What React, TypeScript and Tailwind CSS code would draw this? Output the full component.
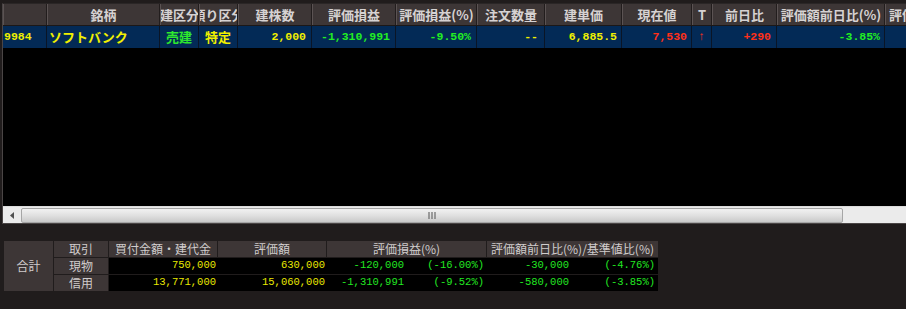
import React from "react";

const JP = "font-['Noto_Sans_CJK_JP',sans-serif]";
const MONO = "font-['Liberation_Mono','Noto_Sans_CJK_JP',monospace]";

type Col = { label: string; w: string };

const cols: Col[] = [
  { label: "", w: "w-[44px]" },
  { label: "銘柄", w: "w-[113px]" },
  { label: "建区分", w: "w-[39px]" },
  { label: "預り区分", w: "w-[39px]" },
  { label: "建株数", w: "w-[74px]" },
  { label: "評価損益", w: "w-[84px]" },
  { label: "評価損益(%)", w: "w-[81px]" },
  { label: "注文数量", w: "w-[68px]" },
  { label: "建単価", w: "w-[77px]" },
  { label: "現在値", w: "w-[70px]" },
  { label: "T", w: "w-[20px]" },
  { label: "前日比", w: "w-[65px]" },
  { label: "評価額前日比(%)", w: "w-[108px]" },
];

const row = [
  { v: "9984", c: "text-[#f0f000]", a: "justify-start pl-[1px]" },
  { v: "ソフトバンク", c: "text-[#f0f000]", a: "justify-start pl-[2px]" },
  { v: "売建", c: "text-[#2ee82e]", a: "justify-center" },
  { v: "特定", c: "text-[#f0f000]", a: "justify-center" },
  { v: "2,000", c: "text-[#f0f000]", a: "justify-end pr-[5px]" },
  { v: "-1,310,991", c: "text-[#22ee22]", a: "justify-end pr-[5px]" },
  { v: "-9.50%", c: "text-[#22ee22]", a: "justify-end pr-[5px]" },
  { v: "--", c: "text-[#f0f000]", a: "justify-end pr-[6px]" },
  { v: "6,885.5", c: "text-[#f0f000]", a: "justify-end pr-[4px]" },
  { v: "7,530", c: "text-[#ff3018]", a: "justify-end pr-[4px]" },
  { v: "↑", c: "text-[#ff3018]", a: "justify-center" },
  { v: "+290", c: "text-[#ff3018]", a: "justify-end pr-[5px]" },
  { v: "-3.85%", c: "text-[#22ee22]", a: "justify-end pr-[4px]" },
];

const summaryRows = [
  { k: "現物", a: "750,000", b: "630,000", c: "-120,000", d: "(-16.00%)", e: "-30,000", f: "(-4.76%)" },
  { k: "信用", a: "13,771,000", b: "15,060,000", c: "-1,310,991", d: "(-9.52%)", e: "-580,000", f: "(-3.85%)" },
];

export default function App() {
  return (
    <div className="w-[906px] h-[309px] bg-[#201c1c] pt-[3px] pl-[2px] overflow-hidden">
      {/* position grid */}
      <div className="h-[221px] border-l border-b border-[#4a4545] border-t border-t-[#2a2626] bg-black flex flex-col overflow-hidden">
        <div className={`flex h-[22px] shrink-0 border-b border-[#1c1818] ${JP}`}>
          {cols.map((c, i) => (
            <div
              key={i}
              className={`${c.w} shrink-0 h-full flex items-center justify-center overflow-hidden whitespace-nowrap bg-[#3d3636] border-l border-l-[#5b5353] border-r border-r-[#221d1d] text-[13px] font-bold text-[#d6d2d2]`}
            >
              {c.label}
            </div>
          ))}
          <div className="w-[120px] shrink-0 h-full flex items-center pl-[3px] overflow-hidden whitespace-nowrap bg-[#3d3636] border-l border-l-[#5b5353] text-[13px] font-bold text-[#d6d2d2]">
            評価損益額
          </div>
        </div>
        <div className="flex h-[22px] shrink-0 bg-[#032a56]">
          {cols.map((c, i) => (
            <div
              key={i}
              className={`${c.w} shrink-0 h-full flex items-center overflow-hidden whitespace-nowrap border-r border-[#0a1526] ${row[i].a} ${row[i].c} ${i === 1 || i === 2 || i === 3 ? JP + " text-[13px]" : MONO + " text-[11.5px]"} font-bold`}
            >
              {row[i].v}
            </div>
          ))}
          <div className="flex-1" />
        </div>
        <div className="flex-1" />
        {/* horizontal scrollbar */}
        <div className="h-[17px] shrink-0 flex bg-[#ebebeb] border-t border-[#dcdcdc]">
          <div className="w-[18px] h-full flex items-center justify-center">
            <svg width="5" height="7" viewBox="0 0 5 7">
              <path d="M4 0 L0 3.5 L4 7 Z" fill="#505050" />
            </svg>
          </div>
          <div className="w-[822px] h-[15px] my-[1px] rounded-[2px] border border-[#a6a6a6] bg-gradient-to-b from-[#f2f2f2] via-[#e0e0e0] to-[#c9c9c9] flex items-center justify-center">
            <svg width="9" height="7" viewBox="0 0 9 7">
              <path d="M1 0 V7 M4 0 V7 M7 0 V7" stroke="#6a6a6a" strokeWidth="1.2" />
            </svg>
          </div>
          <div className="flex-1" />
        </div>
      </div>

      {/* summary */}
      <div className={`mt-[17px] ml-[2px] flex gap-[1px] text-[12px] ${JP}`}>
        <div className="w-[49px] h-[50px] bg-[#3d3636] flex items-center justify-center text-[#d0cccc]">
          合計
        </div>
        <div className="flex flex-col gap-[1px]">
          <div className="flex h-[16px] gap-[1px] text-[#d0cccc]">
            <div className="w-[54px] bg-[#3d3636] flex items-center justify-center">取引</div>
            <div className="w-[108px] bg-[#3d3636] flex items-center justify-center">買付金額・建代金</div>
            <div className="w-[108px] bg-[#3d3636] flex items-center justify-center">評価額</div>
            <div className="w-[159px] bg-[#3d3636] flex items-center justify-center">評価損益(%)</div>
            <div className="w-[171px] bg-[#3d3636] flex items-center justify-center whitespace-nowrap">評価額前日比(%)/基準値比(%)</div>
          </div>
          {summaryRows.map((r) => (
            <div key={r.k} className="flex h-[16px] gap-[1px]">
              <div className="w-[54px] bg-[#3d3636] flex items-center justify-center text-[#d0cccc]">{r.k}</div>
              <div className={`w-[549px] bg-black flex items-center ${MONO} text-[10.5px]`}>
                <div className="w-[107px] text-right text-[#e8e800]">{r.a}</div>
                <div className="w-[109px] text-right text-[#e8e800]">{r.b}</div>
                <div className="w-[79px] text-right text-[#22e822]">{r.c}</div>
                <div className="w-[80px] text-right text-[#22e822]">{r.d}</div>
                <div className="w-[85px] text-right text-[#22e822]">{r.e}</div>
                <div className="w-[86px] text-right text-[#22e822]">{r.f}</div>
              </div>
            </div>
          ))}
        </div>
      </div>
    </div>
  );
}
